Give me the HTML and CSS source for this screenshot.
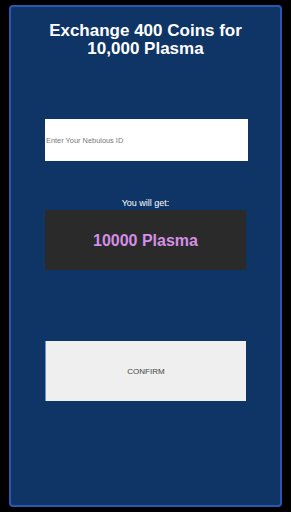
FILE: index.html
```html
<!DOCTYPE html>
<html lang="en">
<head>
    <meta charset="UTF-8">
    <meta name="viewport" content="width=device-width, initial-scale=1.0">
    <title>Exchange Coins</title>
    <link rel="stylesheet" href="styles.css">
</head>
<body>

    <div class="panel">
        <h1 class="title">Exchange 400 Coins for<br>10,000 Plasma</h1>

        <input type="text" class="id-input" placeholder="Enter Your Nebulous ID">

        <p class="get-label">You will get:</p>
        <div class="result-box">10000 Plasma</div>

        <button class="confirm-btn">CONFIRM</button>
    </div>

</body>
</html>
```

FILE: styles.css
```css
/* Basic Layout */
body {
    margin: 0;
    padding: 5px 9px;
    background: #000;
    font-family: "Liberation Sans", Arial, sans-serif;
}

.panel {
    box-sizing: border-box;
    height: 502px;
    padding: 15px 34px 0 34px;
    background: #0f3567;
    border: 2px solid #2c56b4;
    border-radius: 4px;
    display: flex;
    flex-direction: column;
}

.title {
    margin: 0;
    color: #fff;
    font-size: 17px;
    line-height: 18px;
    font-weight: bold;
    text-align: center;
}

.id-input {
    box-sizing: border-box;
    width: 203px;
    height: 42px;
    margin-top: 61px;
    padding: 0 1px;
    border: none;
    background: #fff;
    font-family: "Liberation Sans", Arial, sans-serif;
    font-size: 7.4px;
    outline: none;
}

.id-input::placeholder {
    color: #777;
}

.get-label {
    margin: 37px 0 1px;
    color: #fff;
    font-size: 9px;
    line-height: 11px;
    text-align: center;
}

/* Result */
.result-box {
    box-sizing: border-box;
    width: 201px;
    height: 60px;
    padding-top: 2px;
    background: #2a2a2a;
    color: #d48fe6;
    font-size: 16px;
    font-weight: bold;
    display: flex;
    justify-content: center;
    align-items: center;
}

.confirm-btn {
    width: 201px;
    height: 60px;
    margin-top: 71px;
    padding: 0;
    background: #efefef;
    border: none;
    border-left: 1px solid #6f8fc8;
    color: #444;
    font-family: "Liberation Sans", Arial, sans-serif;
    font-size: 8px;
}
```
